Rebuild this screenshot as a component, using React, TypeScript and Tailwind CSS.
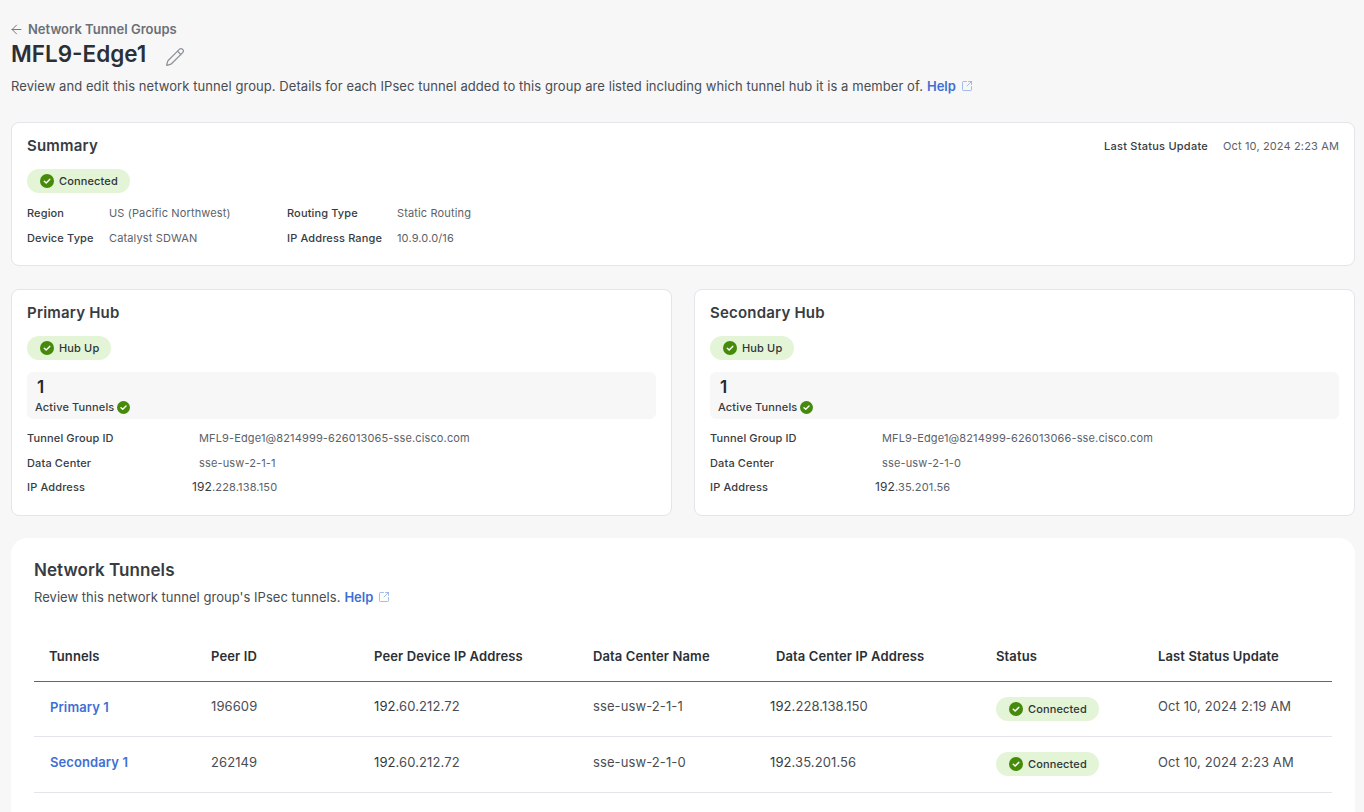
import { ArrowLeft, Pencil, SquareArrowOutUpRight } from "lucide-react";

function CheckDot({ size = "w-[14px] h-[14px]" }: { size?: string }) {
  return (
    <svg className={`${size} shrink-0`} viewBox="0 0 14 14" fill="none">
      <circle cx="7" cy="7" r="7" fill="#458a0a" />
      <path d="M4.3 7.2l1.9 1.8 3.5-3.6" stroke="#fff" strokeWidth="1.5" strokeLinecap="round" strokeLinejoin="round" />
    </svg>
  );
}

function StatusPill({ label, className = "" }: { label: string; className?: string }) {
  return (
    <span className={`inline-flex h-6 items-center gap-[5px] rounded-full bg-[#e3f5d6] pl-[13px] pr-[12px] text-[11px] font-medium tracking-[0.14px] text-[#2f3438] ${className}`}>
      <CheckDot />
      {label}
    </span>
  );
}

function HelpLink() {
  return (
    <a className="ml-[4px] inline-flex items-center gap-[5px] font-semibold tracking-normal text-[#3f6fd4]">
      Help
      <SquareArrowOutUpRight className="-mt-[1px] h-3 w-3 text-[#6f95e0]" strokeWidth={1.25} />
    </a>
  );
}

function IpValue({ rest, offset = "-ml-[7px]", first = "" }: { rest: string; offset?: string; first?: string }) {
  return (
    <span className={offset}>
      <span className={`text-[#33383d] ${first}`}>192</span>
      {rest}
    </span>
  );
}

function Hub({ title, groupId, dataCenter, ipRest }: { title: string; groupId: string; dataCenter: string; ipRest: string }) {
  return (
    <section className="flex-1 rounded-lg border border-[#e3e5ea] bg-white px-[15px] h-[227px]">
      <h2 className="mt-[13px] text-[15px] leading-[20px] font-semibold tracking-[0.2px] text-[#373c42]">{title}</h2>
      <StatusPill label="Hub Up" className="mt-[13px]" />
      <div className="mt-[11px] h-[47px] rounded-md bg-[#f7f7f7] pl-2">
        <div className="pl-[2px] pt-[5px] text-[17px] leading-[20px] font-semibold text-[#23282e]">1</div>
        <div className="mt-[2px] flex items-center gap-[3px] text-[11px] leading-[16px] font-medium tracking-[0.14px] text-[#373c42]">
          Active Tunnels <CheckDot size="w-[13px] h-[13px]" />
        </div>
      </div>
      <dl className="mt-[7px] grid grid-cols-[172px_1fr] text-[11px] tracking-[0.14px] text-[#5c6269]">
        <dt className="h-[25px] leading-[25px] font-medium text-[#373c42]">Tunnel Group ID</dt>
        <dd className="leading-[25px]">{groupId}</dd>
        <dt className="h-[24px] leading-[25px] font-medium text-[#373c42]">Data Center</dt>
        <dd className="leading-[25px]">{dataCenter}</dd>
        <dt className="h-[24px] leading-[23px] font-medium text-[#373c42]">IP Address</dt>
        <dd className="leading-[21px]"><IpValue rest={ipRest} first="text-[12px]" /></dd>
      </dl>
    </section>
  );
}

const rowGrid = "grid grid-cols-[162px_163px_219px_183px_220px_162px_1fr] items-center pl-[15px]";

const rows = [
  { name: "Primary 1", peer: "196609", peerIp: ".60.212.72", dc: "sse-usw-2-1-1", dcIp: ".228.138.150", updated: "Oct 10, 2024 2:19 AM", height: "h-[55px]", pill: "mt-[1px]" },
  { name: "Secondary 1", peer: "262149", peerIp: ".60.212.72", dc: "sse-usw-2-1-0", dcIp: ".35.201.56", updated: "Oct 10, 2024 2:23 AM", height: "h-[56px]", pill: "-mt-[1px]" },
];

export default function App() {
  return (
    <div className="h-[812px] overflow-hidden bg-[#f7f7f7] pl-[11px] pr-[9px] font-['Inter','Noto_Sans',sans-serif]">
      <a className="flex items-center gap-[4px] pt-[21px] text-[13px] leading-[16px] font-semibold text-[#6a7078]">
        <ArrowLeft className="-ml-[2px] h-[15px] w-[15px]" strokeWidth={1.5} />
        Network Tunnel Groups
      </a>
      <div className="mt-[1px] flex items-center gap-[19px]">
        <h1 className="text-[22.5px] leading-[32px] font-semibold text-[#2b3036]">MFL9-Edge1</h1>
        <Pencil className="mt-[6px] h-5 w-5 text-[#8d9299]" strokeWidth={1.5} />
      </div>
      <p className="mt-[7px] flex items-center text-[13px] leading-[18px] tracking-[0.07px] text-[#484d53]">
        Review and edit this network tunnel group. Details for each IPsec tunnel added to this group are listed including which tunnel hub it is a member of.
        <HelpLink />
      </p>

      <section className="mt-[27px] h-[144px] rounded-lg border border-[#e3e5ea] bg-white px-[15px]">
        <div className="flex items-start justify-between pt-[13px]">
          <h2 className="text-[15px] leading-[20px] font-semibold tracking-[0.2px] text-[#373c42]">Summary</h2>
          <div className="flex gap-[15px] text-[11px] leading-[20px] tracking-[0.14px]">
            <span className="font-medium tracking-[0.25px] text-[#373c42]">Last Status Update</span>
            <span className="text-[#5c6269]">Oct 10, 2024 2:23 AM</span>
          </div>
        </div>
        <StatusPill label="Connected" className="mt-[13px]" />
        <dl className="mt-[7px] grid grid-cols-[82px_178px_110px_1fr] text-[11px] leading-[25px] tracking-[0.14px] text-[#5c6269]">
          <dt className="font-medium text-[#373c42]">Region</dt>
          <dd>US (Pacific Northwest)</dd>
          <dt className="font-medium text-[#373c42]">Routing Type</dt>
          <dd>Static Routing</dd>
          <dt className="font-medium text-[#373c42]">Device Type</dt>
          <dd>Catalyst SDWAN</dd>
          <dt className="font-medium text-[#373c42]">IP Address Range</dt>
          <dd>10.9.0.0/16</dd>
        </dl>
      </section>

      <div className="mt-[23px] flex gap-[22px]">
        <Hub title="Primary Hub" groupId="MFL9-Edge1@8214999-626013065-sse.cisco.com" dataCenter="sse-usw-2-1-1" ipRest=".228.138.150" />
        <Hub title="Secondary Hub" groupId="MFL9-Edge1@8214999-626013066-sse.cisco.com" dataCenter="sse-usw-2-1-0" ipRest=".35.201.56" />
      </div>

      <section className="mt-[22px] h-[300px] rounded-2xl bg-white px-[23px]">
        <h2 className="pt-[21px] text-[17px] leading-[22px] font-semibold tracking-[0.06px] text-[#373c42]">Network Tunnels</h2>
        <p className="mt-[7px] flex items-center text-[13px] leading-[18px] tracking-[0.03px] text-[#484d53]">
          Review this network tunnel group's IPsec tunnels.
          <HelpLink />
        </p>
        <div className={`${rowGrid} mt-[26px] h-[50px] border-b border-[#63666d] text-[13px] font-semibold tracking-[0.12px] text-[#2b3036]`}>
          <span>Tunnels</span>
          <span>Peer ID</span>
          <span>Peer Device IP Address</span>
          <span>Data Center Name</span>
          <span>Data Center IP Address</span>
          <span>Status</span>
          <span>Last Status Update</span>
        </div>
        {rows.map((r) => (
          <div key={r.name} className={`${rowGrid} ${r.height} border-b border-[#e3e5ea] text-[13px] tracking-[0.1px] text-[#484d53]`}>
            <a className="-mt-[3px] ml-[1px] font-semibold text-[#3f6fd4]">{r.name}</a>
            <span className="-mt-[4px]">{r.peer}</span>
            <span className="-mt-[4px]"><IpValue rest={r.peerIp} offset="ml-0" /></span>
            <span className="-mt-[4px]">{r.dc}</span>
            <span className="-mt-[4px] -ml-[6px]"><IpValue rest={r.dcIp} offset="ml-0" /></span>
            <span className={r.pill}><StatusPill label="Connected" /></span>
            <span className="-mt-[4px]">{r.updated}</span>
          </div>
        ))}
      </section>
    </div>
  );
}
